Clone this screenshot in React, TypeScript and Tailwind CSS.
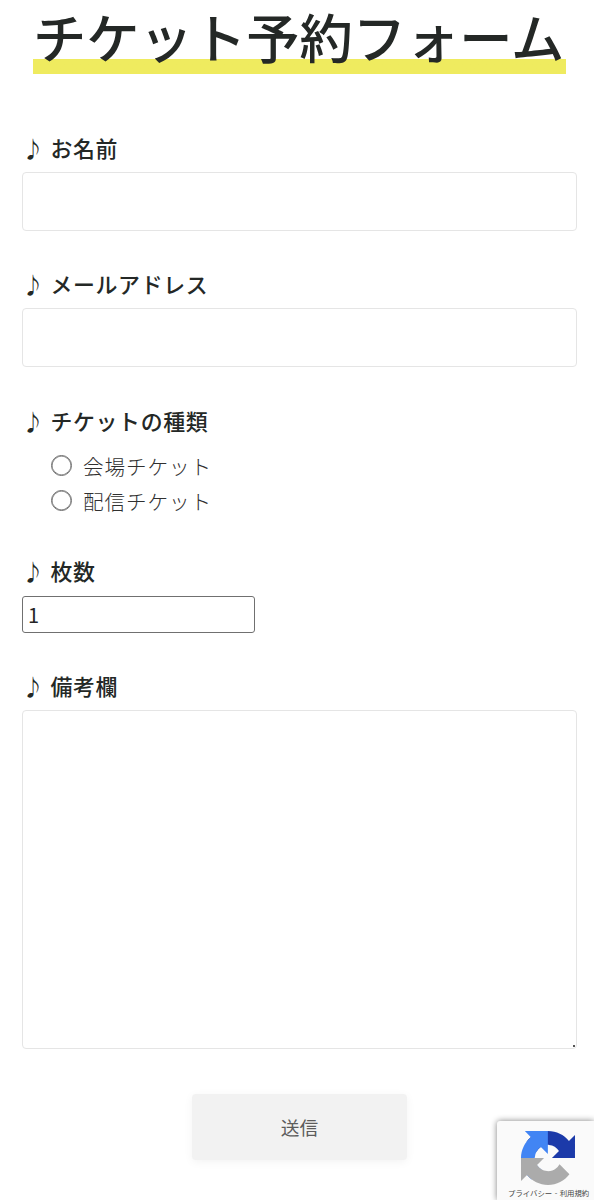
import React, { useState } from 'react';

// Section label with the leading note mark
function FieldLabel({ htmlFor, children }: { htmlFor?: string; children: React.ReactNode }) {
  return (
    <label
      htmlFor={htmlFor}
      className="flex h-8 items-center pb-[2px] text-[21.9px] leading-[30px] font-medium tracking-[0.65px] text-[#242826]"
    >
      <span className="w-[28.5px] shrink-0">♪</span>
      <span>{children}</span>
    </label>
  );
}

function RecaptchaLogo() {
  return (
    <svg viewBox="0 0 64 64" className="h-[54px] w-[54px]" aria-hidden="true">
      <path
        fill="#1c3aa9"
        d="M64 31.955l-.033-1.37V4.687l-7.16 7.16C50.948 4.674 42.033.093 32.05.093c-10.4 0-19.622 4.96-25.458 12.64l11.736 11.86a15.55 15.55 0 0 1 4.754-5.334c2.05-1.6 4.952-2.906 8.968-2.906.485 0 .86.057 1.135.163 4.976.393 9.288 3.14 11.828 7.124l-8.307 8.307L64 31.953"
      />
      <path
        fill="#4285f4"
        d="M31.862.094l-1.37.033H4.594l7.16 7.16C4.58 13.147 0 22.06 0 32.046c0 10.4 4.96 19.622 12.64 25.458L24.5 45.768a15.55 15.55 0 0 1-5.334-4.754c-1.6-2.05-2.906-4.952-2.906-8.968 0-.485.057-.86.163-1.135.393-4.976 3.14-9.288 7.124-11.828l8.307 8.307L31.86.095"
      />
      <path
        fill="#ababab"
        d="M.001 32.045l.033 1.37v25.898l7.16-7.16c5.86 7.173 14.774 11.754 24.76 11.754 10.4 0 19.622-4.96 25.458-12.64l-11.736-11.86a15.55 15.55 0 0 1-4.754 5.334c-2.05 1.6-4.952 2.906-8.968 2.906-.485 0-.86-.057-1.135-.163-4.976-.393-9.288-3.14-11.828-7.124l8.307-8.307c-10.522.04-22.4.066-27.295-.005"
      />
    </svg>
  );
}

const TICKET_TYPES = [
  { id: 'venue', label: '会場チケット' },
  { id: 'stream', label: '配信チケット' },
];

export default function App() {
  const [name, setName] = useState('');
  const [email, setEmail] = useState('');
  const [ticket, setTicket] = useState('');
  const [count, setCount] = useState('1');
  const [note, setNote] = useState('');

  return (
    <div className="relative h-[1200px] w-full bg-white pr-[17px] pl-[22px] font-['Noto_Sans_CJK_JP',sans-serif]">
      <h1 className="ml-[11px] h-[74px] w-[533px] bg-linear-to-b from-transparent from-[59px] to-[#efeb5f] to-[59px] text-[53.3px] leading-[71px] font-medium whitespace-nowrap text-[#242826]">
        チケット予約フォーム
      </h1>

      <form onSubmit={e => e.preventDefault()} className="pt-[59px]">
        <div className="mb-[38px]">
          <FieldLabel htmlFor="name">お名前</FieldLabel>
          <input
            id="name"
            type="text"
            value={name}
            onChange={e => setName(e.target.value)}
            className="mt-[7px] block h-[59px] w-[555px] rounded-[4px] border border-[#e5e5e5] bg-white px-4 text-xl outline-none"
          />
        </div>

        <div className="mb-[39px]">
          <FieldLabel htmlFor="email">メールアドレス</FieldLabel>
          <input
            id="email"
            type="email"
            value={email}
            onChange={e => setEmail(e.target.value)}
            className="mt-[7px] block h-[59px] w-[555px] rounded-[4px] border border-[#e5e5e5] bg-white px-4 text-xl outline-none"
          />
        </div>

        <div className="mb-[38px]">
          <FieldLabel>チケットの種類</FieldLabel>
          <div className="mt-[10px] pl-[29px]">
            {TICKET_TYPES.map(t => (
              <label
                key={t.id}
                className="flex h-[35px] items-center text-[20.6px] font-light tracking-[0.9px] text-[#303030]"
              >
                <input
                  type="radio"
                  name="ticket"
                  checked={ticket === t.id}
                  onChange={() => setTicket(t.id)}
                  className="mr-[11px] h-[21px] w-[21px] shrink-0 appearance-none rounded-full border border-[#6b6b6b] bg-white shadow-[inset_0_0_0_0.5px_#6b6b6b] checked:border-[6px]"
                />
                <span className="pt-[2px]">{t.label}</span>
              </label>
            ))}
          </div>
        </div>

        <div className="mb-[38px]">
          <FieldLabel htmlFor="count">枚数</FieldLabel>
          <input
            id="count"
            type="text"
            inputMode="numeric"
            value={count}
            onChange={e => setCount(e.target.value)}
            className="mt-[8px] block h-[37px] w-[233px] rounded-[3px] border border-[#707070] bg-white px-[5px] text-[20px] text-[#242424] outline-none"
          />
        </div>

        <div>
          <FieldLabel htmlFor="note">備考欄</FieldLabel>
          <div className="relative mt-[7px] h-[339px] w-[555px]">
            <textarea
              id="note"
              value={note}
              onChange={e => setNote(e.target.value)}
              className="block h-full w-full resize-none rounded-[4px] border border-[#e5e5e5] bg-white p-4 text-xl outline-none"
            />
            {/* Resize grip */}
            <span className="absolute right-[2px] bottom-[2px] h-[2px] w-[2px] bg-[#555]" />
          </div>
        </div>

        <button
          type="submit"
          className="mt-[45px] ml-[170px] block h-[66px] w-[215px] rounded-[4px] bg-[#f2f2f2] text-[18.7px] text-[#5c5c5c] shadow-[0_2px_10px_rgba(0,0,0,0.05)]"
        >
          送信
        </button>
      </form>

      {/* reCAPTCHA badge */}
      <div className="absolute right-0 bottom-0 h-[79px] w-[97px] rounded-tl-[3px] bg-[#fafafa] pt-[10px] shadow-[0_0_6px_#808080]">
        <div className="pl-[23.5px]">
          <RecaptchaLogo />
        </div>
        <p className="mt-[2px] pl-[11px] text-[7.4px] leading-3 whitespace-nowrap text-[#444] [word-spacing:0.8px]">
          プライバシー - 利用規約
        </p>
      </div>
    </div>
  );
}
